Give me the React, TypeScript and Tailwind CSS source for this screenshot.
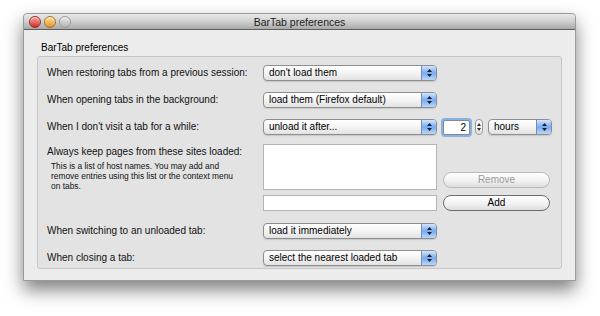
import React from 'react';

const font = { fontFamily: '"Liberation Sans", Arial, sans-serif' };

// aqua pop-up button
const Popup = ({ label, className = 'w-[174px]' }: { label: string; className?: string }) => (
  <div className={`flex h-[16px] rounded-[4px] border border-[#8e8e8e] bg-gradient-to-b from-white via-[#f4f4f4] to-[#e2e2e2] shadow-[0_1px_1px_rgba(0,0,0,0.12)] ${className}`}>
    <div className="flex-1 pl-[5px] text-[10px] leading-[14px] text-black truncate">{label}</div>
    <div className="w-[15px] flex items-center justify-center rounded-r-[3px] border-l border-[#7b8cb3] bg-gradient-to-b from-[#d3e6fc] via-[#78aaf0] to-[#b9d8fb]">
      <svg width="5" height="8" viewBox="0 0 5 8">
        <path d="M2.5 0L5 3H0Z M2.5 8L0 5H5Z" fill="#1b1f2b" />
      </svg>
    </div>
  </div>
);

const Light = ({ from, to, border }: { from: string; to: string; border: string }) => (
  <div
    className={`w-[12px] h-[12px] rounded-full border ${border} bg-gradient-to-b ${from} ${to} shadow-[inset_0_1px_1px_rgba(255,255,255,0.7)]`}
  />
);

const Label = ({ children }: { children: React.ReactNode }) => (
  <div className="w-[216px] shrink-0 text-[10px] leading-[14px] text-[#111]">{children}</div>
);

const PillButton = ({ label, disabled }: { label: string; disabled?: boolean }) => (
  <div
    className={`w-[107px] h-[16px] rounded-full border bg-gradient-to-b from-white via-[#f3f3f3] to-[#dedede] text-center text-[10px] leading-[14px] ${
      disabled ? 'border-[#b9b9b9] text-[#9a9a9a]' : 'border-[#6e6e6e] text-black'
    }`}
  >
    {label}
  </div>
);

export default function App() {
  return (
    <div className="w-[600px] h-[316px] bg-white pt-[13px] pl-[23px]" style={font}>
      <div className="w-[553px] h-[268px] flex flex-col bg-[#ececec] border border-[#9a9a9a] rounded-t-[4px] shadow-[0_9px_18px_rgba(0,0,0,0.5)]">
        {/* title bar */}
        <div className="relative h-[16px] shrink-0 flex items-center rounded-t-[4px] border-b border-[#5e5e5e] bg-gradient-to-b from-[#e9e9e9] via-[#cfcfcf] to-[#a9a9a9]">
          <div className="flex gap-[3px] pl-[5px]">
            <Light from="from-[#f4a4a0]" to="to-[#d2201a]" border="border-[#9c2a25]" />
            <Light from="from-[#fde2a0]" to="to-[#e8930d]" border="border-[#a8701d]" />
            <Light from="from-[#e8e8e8]" to="to-[#b4b4b4]" border="border-[#9a9a9a]" />
          </div>
          <div className="absolute inset-0 text-center text-[10.5px] leading-[16px] text-[#222]">BarTab preferences</div>
        </div>

        <div className="flex-1 px-[13px] pt-[12px] pb-[11px] flex flex-col">
          <div className="pl-[4px] text-[10px] leading-[12px] text-black mb-[2px]">BarTab preferences</div>
          <div className="flex-1 rounded-[3px] border border-[#c6c6c6] bg-[#e3e3e3] pl-[9px] pt-[8px]">
            <div className="flex items-center h-[16px]">
              <Label>When restoring tabs from a previous session:</Label>
              <Popup label="don't load them" />
            </div>
            <div className="flex items-center h-[16px] mt-[11px]">
              <Label>When opening tabs in the background:</Label>
              <Popup label="load them (Firefox default)" />
            </div>
            <div className="flex items-center h-[16px] mt-[11px]">
              <Label>When I don't visit a tab for a while:</Label>
              <Popup label="unload it after..." />
              <div className="ml-[6px] w-[27px] h-[15px] rounded-[2px] border border-[#8a8a8a] bg-white text-right pr-[3px] text-[10px] leading-[13px] text-black ring-2 ring-[#86b2ea]">
                2
              </div>
              <div className="ml-[5px] w-[8px] h-[16px] rounded-[4px] border border-[#9a9a9a] bg-gradient-to-b from-white to-[#e4e4e4] flex flex-col items-center justify-center gap-[2px]">
                <svg width="4" height="3" viewBox="0 0 4 3"><path d="M2 0L4 3H0Z" fill="#333" /></svg>
                <svg width="4" height="3" viewBox="0 0 4 3"><path d="M2 3L0 0H4Z" fill="#333" /></svg>
              </div>
              <Popup label="hours" className="ml-[5px] w-[64px]" />
            </div>

            <div className="flex mt-[9px]">
              <div className="w-[216px] shrink-0 pt-[1px]">
                <div className="text-[10px] leading-[14px] text-[#111]">Always keep pages from these sites loaded:</div>
                <div className="pl-[4px] pt-[2px] text-[8.4px] leading-[10px] text-[#111]">
                  This is a list of host names. You may add and
                  <br />
                  remove entries using this list or the context menu
                  <br />
                  on tabs.
                </div>
              </div>
              <div className="w-[174px] flex flex-col">
                <div className="h-[46px] border border-[#b4b4b4] bg-white" />
                <div className="h-[16px] mt-[5px] border border-[#b4b4b4] bg-white" />
              </div>
              <div className="ml-[6px] flex flex-col justify-end gap-[7px]">
                <PillButton label="Remove" disabled />
                <PillButton label="Add" />
              </div>
            </div>

            <div className="flex items-center h-[16px] mt-[12px]">
              <Label>When switching to an unloaded tab:</Label>
              <Popup label="load it immediately" />
            </div>
            <div className="flex items-center h-[16px] mt-[11px]">
              <Label>When closing a tab:</Label>
              <Popup label="select the nearest loaded tab" />
            </div>
          </div>
        </div>
      </div>
    </div>
  );
}
